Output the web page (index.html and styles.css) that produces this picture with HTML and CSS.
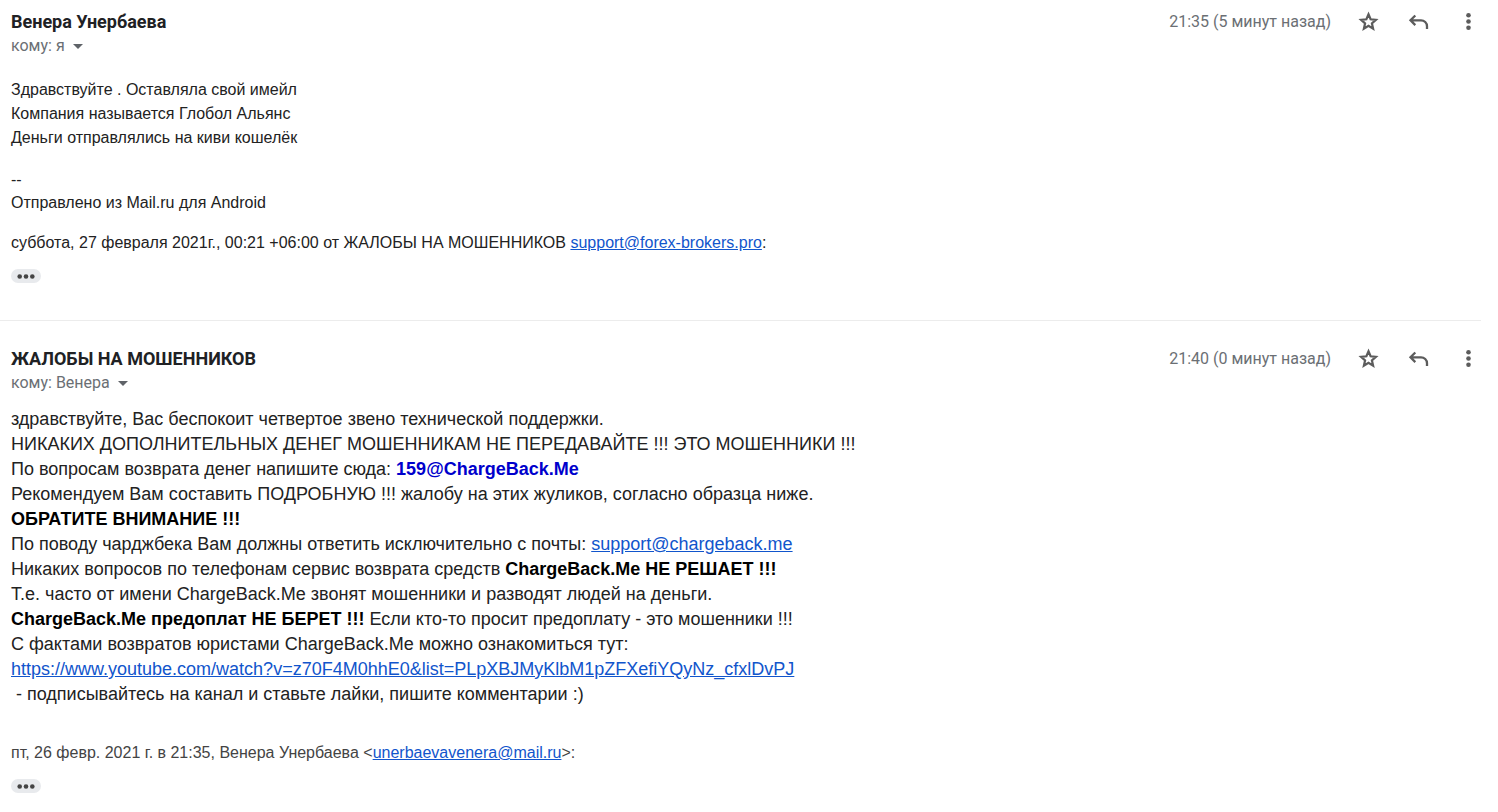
FILE: index.html
```
<!DOCTYPE html>
<html lang="ru">
<head>
<meta charset="utf-8">
<title>Жалобы на мошенников</title>
<link rel="stylesheet" href="styles.css">
</head>
<body>
<svg class="symbols" aria-hidden="true">
  <symbol id="star" viewBox="0 0 24 24"><path d="M11.500 4.300l2.100 5 5.300.5-4 3.500 1.200 5.300-4.600-2.800-4.600 2.800 1.200-5.300-4-3.500 5.300-.5z" fill="none" stroke="currentColor" stroke-width="2.200"/></symbol>
  <symbol id="reply" viewBox="0 0 24 24"><path d="M8.300 5.500L3.500 10.300l4.800 4.800M3.500 10.300h10.500a6 6 0 0 1 6 6v2.700" fill="none" stroke="currentColor" stroke-width="2.300"/></symbol>
  <symbol id="more" viewBox="0 0 24 24"><circle cx="11.500" cy="5.200" r="2.300"/><circle cx="11.500" cy="11.500" r="2.300"/><circle cx="11.500" cy="17.800" r="2.300"/></symbol>
  <symbol id="caret" viewBox="0 0 10 5"><path d="M0 0h10L5 5z"/></symbol>
  <symbol id="dots" viewBox="0 0 18 5"><circle cx="2.700" cy="2.500" r="2.300"/><circle cx="9" cy="2.500" r="2.300"/><circle cx="15.300" cy="2.500" r="2.300"/></symbol>
</svg>
<main class="thread">
  <article class="message message-first">
    <header class="header">
      <div class="sender">
        <h2 class="name">Венера Унербаева</h2>
        <button class="recipient" type="button">кому: я <svg class="caret"><use href="#caret"/></svg></button>
      </div>
      <div class="tools">
        <time class="time">21:35 (5 минут назад)</time>
        <button class="tool" type="button" aria-label="Пометить"><svg class="icon"><use href="#star"/></svg></button>
        <button class="tool" type="button" aria-label="Ответить"><svg class="icon"><use href="#reply"/></svg></button>
        <button class="tool" type="button" aria-label="Ещё"><svg class="icon"><use href="#more"/></svg></button>
      </div>
    </header>
    <div class="body body-small">
      <p class="intro">Здравствуйте . Оставляла свой имейл<br>Компания называется Глобол Альянс<br>Деньги отправлялись на киви кошелёк</p>
      <p class="signature">--<br>Отправлено из Mail.ru для Android</p>
      <p class="quote">суббота, 27 февраля 2021г., 00:21 +06:00 от ЖАЛОБЫ НА МОШЕННИКОВ <a href="mailto:support@forex-brokers.pro">support@forex-brokers.pro</a>:</p>
    </div>
    <button class="trimmed" type="button" aria-label="Показать скрытый текст"><svg class="dots"><use href="#dots"/></svg></button>
  </article>
  <article class="message message-second">
    <header class="header">
      <div class="sender">
        <h2 class="name">ЖАЛОБЫ НА МОШЕННИКОВ</h2>
        <button class="recipient" type="button">кому: Венера <svg class="caret"><use href="#caret"/></svg></button>
      </div>
      <div class="tools">
        <time class="time">21:40 (0 минут назад)</time>
        <button class="tool" type="button" aria-label="Пометить"><svg class="icon"><use href="#star"/></svg></button>
        <button class="tool" type="button" aria-label="Ответить"><svg class="icon"><use href="#reply"/></svg></button>
        <button class="tool" type="button" aria-label="Ещё"><svg class="icon"><use href="#more"/></svg></button>
      </div>
    </header>
    <div class="body body-large">
      <p>здравствуйте, Вас беспокоит четвертое звено технической поддержки.</p>
      <p>НИКАКИХ ДОПОЛНИТЕЛЬНЫХ ДЕНЕГ МОШЕННИКАМ НЕ ПЕРЕДАВАЙТЕ !!! ЭТО МОШЕННИКИ !!!</p>
      <p>По вопросам возврата денег напишите сюда: <b class="address">159@ChargeBack.Me</b></p>
      <p>Рекомендуем Вам составить ПОДРОБНУЮ !!! жалобу на этих жуликов, согласно образца ниже.</p>
      <p><b>ОБРАТИТЕ ВНИМАНИЕ !!!</b></p>
      <p>По поводу чарджбека Вам должны ответить исключительно с почты: <a href="mailto:support@chargeback.me">support@chargeback.me</a></p>
      <p>Никаких вопросов по телефонам сервис возврата средств <b>ChargeBack.Me НЕ РЕШАЕТ !!!</b></p>
      <p>Т.е. часто от имени ChargeBack.Me звонят мошенники и разводят людей на деньги.</p>
      <p><b>ChargeBack.Me предоплат НЕ БЕРЕТ !!!</b> Если кто-то просит предоплату - это мошенники !!!</p>
      <p>С фактами возвратов юристами ChargeBack.Me можно ознакомиться тут:</p>
      <p><a href="https://www.youtube.com/watch?v=z70F4M0hhE0&amp;list=PLpXBJMyKlbM1pZFXefiYQyNz_cfxlDvPJ">https://www.youtube.com/watch?v=z70F4M0hhE0&amp;list=PLpXBJMyKlbM1pZFXefiYQyNz_cfxlDvPJ</a></p>
      <p>&nbsp;- подписывайтесь на канал и ставьте лайки, пишите комментарии :)</p>
    </div>
    <p class="quote quote-muted">пт, 26 февр. 2021 г. в 21:35, Венера Унербаева &lt;<a href="mailto:unerbaevavenera@mail.ru">unerbaevavenera@mail.ru</a>&gt;:</p>
    <button class="trimmed" type="button" aria-label="Показать скрытый текст"><svg class="dots"><use href="#dots"/></svg></button>
  </article>
</main>
</body>
</html>
```
FILE: styles.css
```
* { box-sizing: border-box; }
body { margin: 0; background: #fff; color: #222; font-family: "Liberation Sans", Arial, sans-serif; }
p, h2 { margin: 0; }
button { border: 0; padding: 0; background: none; font: inherit; color: inherit; cursor: pointer; }
a { color: #15c; text-decoration: underline; }
.symbols { display: none; }
.thread { margin-right: 17px; }
.message { padding-left: 11px; }
.message-first { padding-top: 10px; padding-bottom: 37px; border-bottom: 1px solid #ececec; }
.message-second { padding-top: 26px; }
.header { display: flex; justify-content: space-between; align-items: flex-start; }
.sender { display: flex; flex-direction: column; align-items: flex-start; gap: 3px; }
.name { font: 700 18px/24px Roboto, sans-serif; color: #202124; }
.recipient { display: flex; align-items: center; gap: 8px; font: 16px/18px Roboto, sans-serif; color: #6b6f74; }
.caret { width: 10px; height: 5px; fill: #5f6368; }
.tools { display: flex; align-items: center; gap: 26px; }
.time { font: 16px/24px Roboto, sans-serif; color: #6b6f74; }
.tool { display: flex; width: 24px; height: 24px; }
.icon { width: 24px; height: 24px; fill: #5c5c5c; color: #5c5c5c; }
.body-small { font-size: 16px; }
.intro { margin-top: 23px; line-height: 24px; }
.signature { margin-top: 18px; line-height: 23px; }
.quote { margin-top: 17px; font-size: 16px; line-height: 23px; }
.body-large { margin-top: 15px; font-size: 18px; line-height: 25px; }
.body-large b { color: #000; }
.body-large .address { color: #00c; }
.quote-muted { margin-top: 34px; color: #444; }
.trimmed { display: flex; align-items: center; justify-content: center; width: 30px; height: 14px; margin-top: 15px; border-radius: 7px; background: #e8eaed; }
.dots { width: 18px; height: 5px; fill: #444; }
```
